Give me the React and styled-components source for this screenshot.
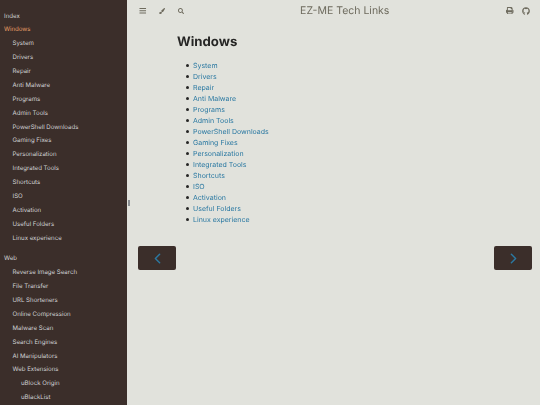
import React from 'react';
import styled, { createGlobalStyle } from 'styled-components';
import { FaBars, FaPaintBrush, FaSearch, FaPrint, FaGithub } from 'react-icons/fa';
import { ChevronLeft, ChevronRight } from 'lucide-react';

const GlobalStyle = createGlobalStyle`
  html, body {
    margin: 0;
    padding: 0;
    height: 100%;
    overflow: hidden;
    background-color: #e1e2dc;
    font-family: Inter, "Liberation Sans", sans-serif;
    text-rendering: geometricPrecision;
  }
`;

const Page = styled.div`
  display: flex;
  width: 540px;
  height: 405px;
  overflow: hidden;
  filter: blur(0.3px);
`;

const Sidebar = styled.nav`
  position: relative;
  flex: 0 0 127px;
  height: 405px;
  box-sizing: border-box;
  padding-top: 9.5px;
  background-color: #3b2e2a;
`;

const ResizeHandle = styled.div`
  position: absolute;
  top: 200px;
  right: -3px;
  width: 2px;
  height: 6px;
  background-color: #8a8f93;
`;

const SidebarItem = styled.div`
  height: 13.875px;
  line-height: 13.875px;
  padding-left: ${(props) => props.$level * 8.5 + 4}px;
  font-size: 6.1px;
  white-space: nowrap;
  color: ${(props) => (props.$active ? '#e69f67' : '#d0d1d3')};
`;

const Spacer = styled.div`
  height: 7px;
`;

const Main = styled.main`
  flex: 1;
  min-width: 0;
  display: flex;
  flex-direction: column;
  height: 405px;
`;

const MenuBar = styled.header`
  flex: 0 0 21px;
  display: flex;
  align-items: center;
  justify-content: space-between;
  padding: 0 10px 0 12px;
`;

const IconGroup = styled.div`
  display: flex;
  align-items: center;
  gap: ${(props) => props.$gap}px;
  color: #6e6b5e;
  font-size: 7.5px;
`;

const MenuTitle = styled.h1`
  margin: 0;
  font-size: 10.5px;
  font-weight: 400;
  color: #6e6b5e;
`;

const Content = styled.div`
  flex: 1;
  padding: 12px 0 0 50px;
`;

const Heading = styled.h2`
  margin: 0 0 8px;
  font-size: 13.2px;
  line-height: 19px;
  font-weight: 700;
  color: #262625;
`;

const LinkList = styled.ul`
  margin: 0;
  padding: 0 0 0 16px;
  list-style: none;
  font-size: 7px;
  line-height: 11px;
`;

const LinkItem = styled.li`
  display: flex;
  align-items: center;
  height: 11px;

  &::before {
    content: '';
    flex: none;
    width: 3px;
    height: 3px;
    margin-left: -7.5px;
    margin-right: 4.5px;
    border-radius: 50%;
    background-color: #262625;
  }
`;

const TopicLink = styled.a`
  color: #2b79a2;
  text-decoration: none;
`;

const NavRow = styled.div`
  display: flex;
  justify-content: space-between;
  padding: 0 8px 0 11px;
  margin-bottom: 135px;
`;

const NavButton = styled.div`
  width: 38px;
  height: 24px;
  display: flex;
  align-items: center;
  justify-content: center;
  border-radius: 2px;
  background-color: #3b2e2a;
  color: #2b79a2;
`;

const sidebarItems = [
  ['Index', 0], ['Windows', 0, true], ['System', 1], ['Drivers', 1], ['Repair', 1], ['Anti Malware', 1],
  ['Programs', 1], ['Admin Tools', 1], ['PowerShell Downloads', 1], ['Gaming Fixes', 1], ['Personalization', 1],
  ['Integrated Tools', 1], ['Shortcuts', 1], ['ISO', 1], ['Activation', 1], ['Useful Folders', 1],
  ['Linux experience', 1], null, ['Web', 0], ['Reverse Image Search', 1], ['File Transfer', 1], ['URL Shorteners', 1],
  ['Online Compression', 1], ['Malware Scan', 1], ['Search Engines', 1], ['AI Manipulators', 1], ['Web Extensions', 1],
  ['uBlock Origin', 2], ['uBlackList', 2],
];

const links = [
  'System', 'Drivers', 'Repair', 'Anti Malware', 'Programs', 'Admin Tools', 'PowerShell Downloads', 'Gaming Fixes',
  'Personalization', 'Integrated Tools', 'Shortcuts', 'ISO', 'Activation', 'Useful Folders', 'Linux experience',
];

const App = () => (
  <Page>
    <GlobalStyle />
    <Sidebar>
      {sidebarItems.map((item, i) =>
        item ? (
          <SidebarItem key={i} $level={item[1]} $active={item[2]}>{item[0]}</SidebarItem>
        ) : (
          <Spacer key={i} />
        )
      )}
      <ResizeHandle />
    </Sidebar>
    <Main>
      <MenuBar>
        <IconGroup $gap={12.5}>
          <FaBars />
          <FaPaintBrush size={6} />
          <FaSearch size={6} />
        </IconGroup>
        <MenuTitle>EZ-ME Tech Links</MenuTitle>
        <IconGroup $gap={8.5}>
          <FaPrint />
          <FaGithub size={8} />
        </IconGroup>
      </MenuBar>
      <Content>
        <Heading>Windows</Heading>
        <LinkList>
          {links.map((l) => (
            <LinkItem key={l}><TopicLink>{l}</TopicLink></LinkItem>
          ))}
        </LinkList>
      </Content>
      <NavRow>
        <NavButton><ChevronLeft size={17} strokeWidth={2} /></NavButton>
        <NavButton><ChevronRight size={17} strokeWidth={2} /></NavButton>
      </NavRow>
    </Main>
  </Page>
);

export default App;
